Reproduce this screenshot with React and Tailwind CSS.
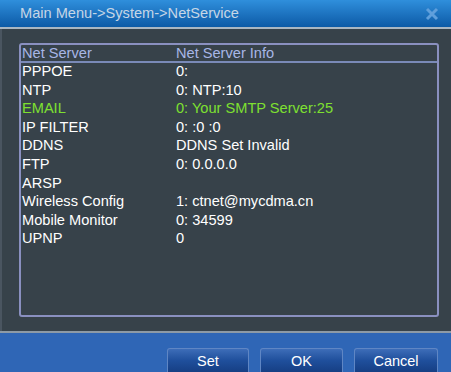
import React from "react";

const rows = [
  ["PPPOE", "0:"],
  ["NTP", "0: NTP:10"],
  ["EMAIL", "0: Your SMTP Server:25", true],
  ["IP FILTER", "0: :0 :0"],
  ["DDNS", "DDNS Set Invalid"],
  ["FTP", "0: 0.0.0.0"],
  ["ARSP", ""],
  ["Wireless Config", "1: ctnet@mycdma.cn"],
  ["Mobile Monitor", "0: 34599"],
  ["UPNP", "0"],
];

function Btn({ label, w }) {
  return (
    <button
      className={`${w} h-[24px] rounded-t-[3px] border-t border-x border-[#5f86c4] bg-gradient-to-b from-[#3d6db8] via-[#1f4f9c] to-[#163f84] text-white text-[14.5px] leading-[22px]`}
    >
      {label}
    </button>
  );
}

export default function App() {
  return (
    <div className="w-[451px] h-[372px] flex flex-col bg-[#37424a] font-['Liberation_Sans',Arial,sans-serif] overflow-hidden">
      {/* title bar */}
      <div className="h-[27px] shrink-0 flex items-center justify-between pl-[20px] pr-[12px] bg-gradient-to-b from-[#2f8fdc] to-[#0c5aa6]">
        <span className="text-[14.6px] text-[#c6d6e6]">Main Menu-&gt;System-&gt;NetService</span>
        <svg width="14" height="14" viewBox="0 0 14 14">
          <path d="M2 2 L12 12 M12 2 L2 12" stroke="#5f9fdc" strokeWidth="3" />
        </svg>
      </div>
      <div className="h-[2px] shrink-0 bg-[#a9b6c2]" />

      {/* body */}
      <div className="flex-1 border-l-2 border-[#4a5560] pt-[14px] pl-[17px] pr-[12px] pb-[14px] flex">
        <div className="flex-1 border-2 border-[#8a90c0] rounded-[3px] text-[14.6px] leading-[18.6px]">
          <div className="flex h-[18px] border-b-2 border-[#7a8ab8] text-[#a7b6e6] leading-[17px]">
            <span className="w-[155px] pl-[1px]">Net Server</span>
            <span>Net Server Info</span>
          </div>
          <div className="-mt-[1px]">
            {rows.map(([k, v, hl]) => (
              <div key={k} className={`flex h-[18.6px] ${hl ? "text-[#7ee030]" : "text-white"}`}>
                <span className="w-[155px] pl-[1px]">{k}</span>
                <span>{v}</span>
              </div>
            ))}
          </div>
        </div>
      </div>

      {/* bottom bar */}
      <div className="h-[2px] shrink-0 bg-[#8d9aa6]" />
      <div className="h-[39px] shrink-0 bg-[#2f66b6] flex items-end justify-end gap-[11px] pr-[13px]">
        <Btn label="Set" w="w-[82px]" />
        <Btn label="OK" w="w-[83px]" />
        <Btn label="Cancel" w="w-[84px]" />
      </div>
    </div>
  );
}
